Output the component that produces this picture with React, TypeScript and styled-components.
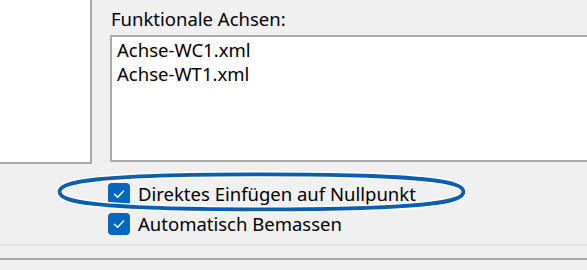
import React, { FunctionComponent } from 'react';
import styled, { createGlobalStyle } from 'styled-components';

const GlobalStyle = createGlobalStyle`
    html, body {
        margin: 0;
        padding: 0;
        background: #ffffff;
    }
    body {
        font-family: 'Noto Sans', 'Open Sans', sans-serif;
        font-size: 18.5px;
        color: #000000;
    }
`;

const files = ['Achse-WC1.xml', 'Achse-WT1.xml'];
const options = ['Direktes Einfügen auf Nullpunkt', 'Automatisch Bemassen'];

// hand drawn marker round the first option, a bit flatter than an ellipse
const ringPath =
    'M463.5 191.8 C463.5 182.2 432.8 174.4 261.5 174.4 C90.2 174.4 59.5 182.2 59.5 191.8 ' +
    'C59.5 201.4 90.2 209.4 261.5 209.4 C432.8 209.4 463.5 201.4 463.5 191.8 Z';

const App: FunctionComponent = () => {
    return (
        <>
            <GlobalStyle />
            <Dialog>
                <TopArea>
                    <LeftPanel />
                    <AxesSection>
                        <FieldLabel>Funktionale Achsen:</FieldLabel>
                        <ListBox>
                            {files.map((f) => (
                                <ListItem key={f}>{f}</ListItem>
                            ))}
                        </ListBox>
                    </AxesSection>
                </TopArea>
                <OptionGroup>
                    {options.map((o) => (
                        <CheckRow key={o}>
                            <CheckBox>
                                <svg width="22" height="22" viewBox="0 0 22 22">
                                    <path d="M6.5 11.2 L9.6 14.2 L15.6 8" fill="none" stroke="#ffffff" strokeWidth="1.4" strokeLinecap="round" strokeLinejoin="round" />
                                </svg>
                            </CheckBox>
                            <CheckLabel>{o}</CheckLabel>
                        </CheckRow>
                    ))}
                </OptionGroup>
                <Footer />
                <Highlight width="587" height="270" viewBox="0 0 587 270">
                    <path d={ringPath} fill="none" stroke="#ffffff" strokeWidth="7" />
                    <path d={ringPath} fill="none" stroke="#0a5eae" strokeWidth="3.8" />
                </Highlight>
            </Dialog>
        </>
    );
};

export default App;

const Dialog = styled.div`
    position: relative;
    width: 587px;
    height: 270px;
    overflow: hidden;
    background: #f0f0f0;
    display: flex;
    flex-direction: column;
`;

const TopArea = styled.div`
    display: flex;
    height: 164px;
`;

const LeftPanel = styled.div`
    width: 90px;
    height: 162px;
    background: #ffffff;
    border-right: 2px solid #a9a9a9;
    border-bottom: 2px solid #a9a9a9;
`;

const AxesSection = styled.div`
    flex: 1;
    display: flex;
    flex-direction: column;
    padding-left: 18px;
`;

const FieldLabel = styled.div`
    height: 33px;
    padding: 2px 0 0 1px;
    line-height: 33px;
    white-space: nowrap;
`;

const ListBox = styled.div`
    height: 122px;
    background: #ffffff;
    border: 2px solid #a9a9a9;
    border-right: none;
    padding: 1px 0 0 5px;
`;

const ListItem = styled.div`
    line-height: 24px;
    white-space: nowrap;
`;

const OptionGroup = styled.div`
    display: flex;
    flex-direction: column;
    padding: 19px 0 0 108px;
`;

const CheckRow = styled.div`
    display: flex;
    align-items: center;
    gap: 8px;
    height: 30px;
`;

const CheckBox = styled.div`
    width: 22px;
    height: 22px;
    margin-top: -8px;
    border-radius: 4px;
    background: #0067c0;
    display: flex;
    align-items: center;
    justify-content: center;
`;

const CheckLabel = styled.span`
    margin-top: -9px;
    white-space: nowrap;
`;

const Footer = styled.div`
    margin-top: 1px;
    height: 12px;
    border-top: 2px solid #e2e2e2;
    border-bottom: 2px solid #a9a9a9;
    background: #f0f0f0;
`;

const Highlight = styled.svg`
    position: absolute;
    left: 0;
    top: 0;
    pointer-events: none;
`;
